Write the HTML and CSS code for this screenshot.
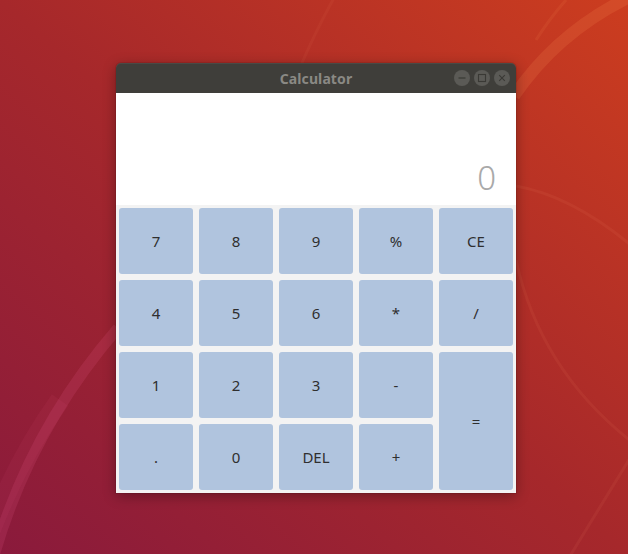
FILE: index.html
```html
<!DOCTYPE html>
<html>
<head>
<meta charset="utf-8">
<title>Calculator</title>
<link rel="stylesheet" href="styles.css">
</head>
<body>
<div class="desktop">
  <svg class="wallpaper" width="628" height="554" viewBox="0 0 628 554" xmlns="http://www.w3.org/2000/svg">
    <path d="M -6 556 Q 30 430 118 328" fill="none" stroke="rgba(255,110,160,0.13)" stroke-width="11"/>
    <path d="M -20 560 Q 10 470 60 400" fill="none" stroke="rgba(255,110,160,0.06)" stroke-width="20"/>
    <path d="M 640 -8 Q 560 28 514 96" fill="none" stroke="rgba(255,150,90,0.16)" stroke-width="12"/>
    <path d="M 566 0 Q 550 18 536 40" fill="none" stroke="rgba(255,150,90,0.10)" stroke-width="3"/>
    <path d="M 516 186 Q 572 196 632 246" fill="none" stroke="rgba(255,150,120,0.08)" stroke-width="3"/>
    <path d="M 516 260 Q 540 370 632 442" fill="none" stroke="rgba(255,150,120,0.08)" stroke-width="3"/>
    <path d="M 630 458 L 570 556" fill="none" stroke="rgba(255,150,120,0.08)" stroke-width="3"/>
    <path d="M 334 -2 Q 316 30 298 72" fill="none" stroke="rgba(255,150,120,0.06)" stroke-width="3"/>
  </svg>

  <div class="window">
    <div class="titlebar">
      <span class="title">Calculator</span>
      <div class="controls">
        <span class="ctl">
          <svg width="16" height="16" viewBox="0 0 16 16"><path d="M4.5 8 H11.5" stroke="#3a3935" stroke-width="1.2"/></svg>
        </span>
        <span class="ctl">
          <svg width="16" height="16" viewBox="0 0 16 16"><rect x="4.5" y="4.5" width="7" height="7" fill="none" stroke="#3a3935" stroke-width="1.1"/></svg>
        </span>
        <span class="ctl">
          <svg width="16" height="16" viewBox="0 0 16 16"><path d="M5.2 5.2 L10.8 10.8 M10.8 5.2 L5.2 10.8" stroke="#3a3935" stroke-width="1.1"/></svg>
        </span>
      </div>
    </div>
    <div class="display"><span class="value">0</span></div>
    <div class="keys">
      <div class="key">7</div>
      <div class="key">8</div>
      <div class="key">9</div>
      <div class="key">%</div>
      <div class="key">CE</div>
      <div class="key">4</div>
      <div class="key">5</div>
      <div class="key">6</div>
      <div class="key">*</div>
      <div class="key">/</div>
      <div class="key">1</div>
      <div class="key">2</div>
      <div class="key">3</div>
      <div class="key">-</div>
      <div class="key equals">=</div>
      <div class="key">.</div>
      <div class="key">0</div>
      <div class="key">DEL</div>
      <div class="key">+</div>
    </div>
  </div>
</div>
</body>
</html>
```

FILE: styles.css
```css
html, body {
  margin: 0;
  padding: 0;
}

body {
  width: 628px;
  height: 554px;
  overflow: hidden;
}

.desktop {
  position: relative;
  width: 628px;
  height: 554px;
  background: linear-gradient(to top right, #8a1a3c 0%, #a6282b 50%, #cc3d1f 100%);
}

.wallpaper {
  position: absolute;
  left: 0;
  top: 0;
}

.window {
  position: absolute;
  left: 116px;
  top: 63px;
  width: 400px;
  display: flex;
  flex-direction: column;
  border-radius: 5px 5px 0 0;
  box-shadow: 0 3px 14px rgba(0, 0, 0, 0.32), 0 0 0 1px rgba(0, 0, 0, 0.08);
}

.titlebar {
  position: relative;
  height: 30px;
  background: #3f3e3a;
  border-radius: 5px 5px 0 0;
  display: flex;
  align-items: center;
  justify-content: center;
  box-shadow: inset 0 1px 0 rgba(255, 255, 255, 0.06);
}

.title {
  font-family: "Noto Sans", "DejaVu Sans", sans-serif;
  font-weight: bold;
  font-size: 14px;
  color: #8a8984;
  letter-spacing: 0.1px;
}

.controls {
  position: absolute;
  right: 6px;
  top: 7px;
  display: flex;
  gap: 4px;
}

.ctl {
  width: 16px;
  height: 16px;
  border-radius: 50%;
  background: #5b5a56;
  display: flex;
}

.display {
  height: 112px;
  background: #ffffff;
  display: flex;
  justify-content: flex-end;
  align-items: flex-end;
  padding: 0 20px 7px 0;
  box-sizing: border-box;
}

.value {
  font-family: "Noto Sans", "DejaVu Sans", sans-serif;
  font-size: 33px;
  line-height: 40px;
  color: #a9a9a9;
  font-weight: 300;
}

.keys {
  display: grid;
  grid-template-columns: repeat(5, 74px);
  grid-template-rows: repeat(4, 66px);
  gap: 6px;
  padding: 3px;
  background: #f3f3f3;
}

.key {
  background: #b0c4de;
  border-radius: 3px;
  display: flex;
  align-items: center;
  justify-content: center;
  font-family: "Noto Sans", "DejaVu Sans", sans-serif;
  font-size: 15px;
  color: #2f2f2f;
}

.equals {
  grid-column: 5;
  grid-row: 3 / span 2;
}
```
